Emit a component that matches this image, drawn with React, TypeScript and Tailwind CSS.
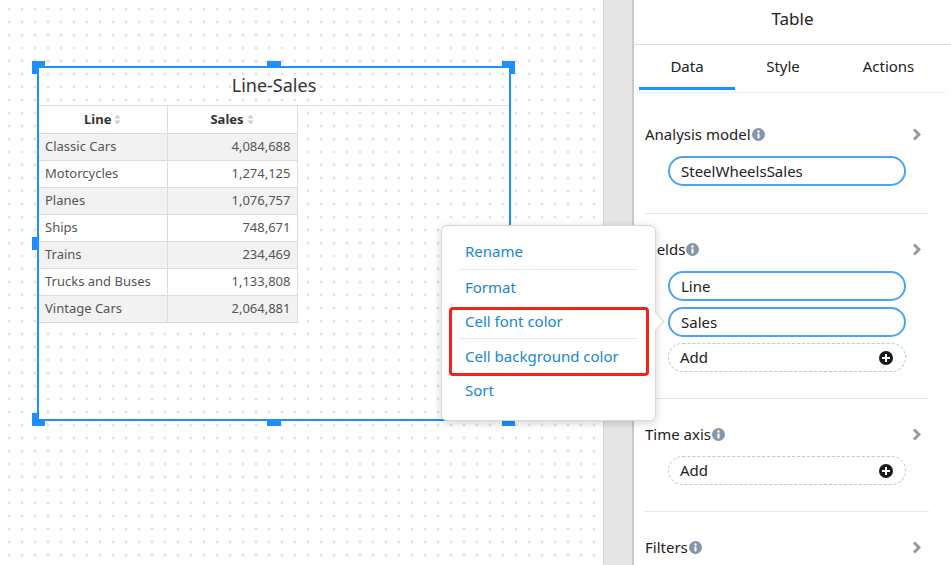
import React from "react";

const rows = [
  { line: "Classic Cars", sales: "4,084,688" },
  { line: "Motorcycles", sales: "1,274,125" },
  { line: "Planes", sales: "1,076,757" },
  { line: "Ships", sales: "748,671" },
  { line: "Trains", sales: "234,469" },
  { line: "Trucks and Buses", sales: "1,133,808" },
  { line: "Vintage Cars", sales: "2,064,881" },
];

const dots =
  "bg-fixed bg-[radial-gradient(circle,#dcdcdc_1px,transparent_1.5px)] bg-[length:13px_13px] bg-[position:2.5px_2.5px]";

const SortIcon = () => (
  <svg width="7" height="11" viewBox="0 0 7 11" className="ml-[3px]">
    <path d="M3.5 0.5 L6.5 4.5 H0.5 Z" fill="#cccccc" />
    <path d="M3.5 10.5 L6.5 6.5 H0.5 Z" fill="#cccccc" />
  </svg>
);

const InfoIcon = () => (
  <svg width="13" height="13" viewBox="0 0 14 14" className="ml-[1px]">
    <circle cx="7" cy="7" r="7" fill="#8795a8" />
    <circle cx="7" cy="3.8" r="1.3" fill="#fff" />
    <rect x="5.9" y="5.8" width="2.2" height="5.4" rx="0.6" fill="#fff" />
  </svg>
);

const Chevron = () => (
  <svg width="9" height="13" viewBox="0 0 9 13">
    <path d="M2 1.5 L7 6.5 L2 11.5" fill="none" stroke="#9a9a9a" strokeWidth="3" />
  </svg>
);

const PlusCircle = () => (
  <svg width="14" height="14" viewBox="0 0 14 14">
    <circle cx="7" cy="7" r="7" fill="#1a1a1a" />
    <rect x="6" y="3" width="2" height="8" fill="#fff" />
    <rect x="3" y="6" width="8" height="2" fill="#fff" />
  </svg>
);

const Pill = ({ label }: { label: string }) => (
  <div className="ml-[23px] flex h-[30px] w-[238px] items-center rounded-full border-2 border-[#4ba3f1] px-[11px] text-[15px] text-[#222]">
    {label}
  </div>
);

const AddPill = () => (
  <div className="ml-[23px] flex h-[29px] w-[238px] items-center justify-between rounded-full border border-dashed border-[#c6c6c6] pl-[11px] pr-[12px] text-[15px] text-[#222]">
    <span>Add</span>
    <PlusCircle />
  </div>
);

const Section = ({
  title,
  children,
  first,
}: {
  title: string;
  children?: React.ReactNode;
  first?: boolean;
}) => (
  <div
    className={
      first
        ? "mr-[22px] pt-[31px] pb-[27px]"
        : "mr-[22px] border-t border-[#e6e6e6] pt-[25px] pb-[26px]"
    }
  >
    <div className="flex h-[20px] items-center justify-between pr-[8px] text-[15px] text-[#222]">
      <div className="flex items-center">
        {title}
        <InfoIcon />
      </div>
      <Chevron />
    </div>
    {children && <div className="mt-[12px] flex flex-col gap-[6px]">{children}</div>}
  </div>
);

const Handle = ({ className }: { className: string }) => (
  <div className={"absolute z-0 bg-[#1e8fff] " + className} />
);

export default function App() {
  return (
    <div className="relative flex h-[565px] w-[951px] overflow-hidden bg-white font-['Noto_Sans',sans-serif]">
      {/* canvas */}
      <div className={"relative h-full w-[603px] bg-white " + dots}>
        <Handle className="left-[32px] top-[61px] h-[13px] w-[13px]" />
        <Handle className="left-[502px] top-[61px] h-[13px] w-[13px]" />
        <Handle className="left-[32px] top-[413px] h-[13px] w-[13px]" />
        <Handle className="left-[502px] top-[413px] h-[13px] w-[13px]" />
        <Handle className="left-[267px] top-[61px] h-[13px] w-[14px]" />
        <Handle className="left-[267px] top-[413px] h-[13px] w-[14px]" />
        <Handle className="left-[32px] top-[237px] h-[13px] w-[13px]" />
        <Handle className="left-[502px] top-[237px] h-[13px] w-[13px]" />

        <div
          className={
            "absolute left-[37px] top-[66px] z-10 h-[355px] w-[474px] border-2 border-[#1e8fff] bg-white " +
            dots
          }
        >
          <div className="flex h-[37px] items-center justify-center pb-[2px] text-[18px] text-[#333]">
            Line-Sales
          </div>
          <div className="border-t border-[#dcdcdc]">
            <table className="border-collapse text-[13px] text-[#555]">
              <thead>
                <tr className="h-[27px] bg-white">
                  <th className="w-[128px] border-r border-b border-[#dcdcdc] p-0 font-bold text-[#333]">
                    <div className="flex items-center justify-center">
                      Line
                      <SortIcon />
                    </div>
                  </th>
                  <th className="w-[130px] border-r border-b border-[#dcdcdc] p-0 font-bold text-[#333]">
                    <div className="flex items-center justify-center">
                      Sales
                      <SortIcon />
                    </div>
                  </th>
                </tr>
              </thead>
              <tbody>
                {rows.map((r, i) => (
                  <tr
                    key={r.line}
                    className={i % 2 === 0 ? "h-[27px] bg-[#f2f2f2]" : "h-[27px] bg-white"}
                  >
                    <td className="border-r border-b border-[#dcdcdc] px-[6px] py-0">{r.line}</td>
                    <td className="border-r border-b border-[#dcdcdc] px-[6px] py-0 text-right">
                      {r.sales}
                    </td>
                  </tr>
                ))}
              </tbody>
            </table>
          </div>
        </div>
      </div>

      {/* splitter */}
      <div className="h-full w-[31px] border-l border-[#d6d6d6] border-r-2 border-r-[#c9c9c9] bg-[#e6e6e6]" />

      {/* property panel */}
      <div className="flex h-full flex-1 flex-col bg-white text-[#222]">
        <div className="flex h-[45px] shrink-0 items-center justify-center border-b border-[#dedede] pb-[6px] text-[17px]">
          Table
        </div>
        <div className="mx-[5px] flex h-[48px] shrink-0 border-b border-[#ececec] text-[15px]">
          <div className="flex w-[96px] flex-col">
            <div className="flex flex-1 items-center justify-center pt-[1px]">Data</div>
            <div className="mb-[2px] h-[3px] bg-[#1e8fff]" />
          </div>
          <div className="flex w-[96px] items-center justify-center pb-[4px]">Style</div>
          <div className="flex flex-1 items-center justify-center pb-[4px]">Actions</div>
        </div>
        <div className="pl-[11px]">
          <Section title="Analysis model" first>
            <Pill label="SteelWheelsSales" />
          </Section>
          <Section title="Fields">
            <Pill label="Line" />
            <Pill label="Sales" />
            <AddPill />
          </Section>
          <Section title="Time axis">
            <AddPill />
          </Section>
          <Section title="Filters" />
        </div>
      </div>

      {/* context menu */}
      <div className="absolute left-[441px] top-[225px] z-20 h-[196px] w-[215px] rounded-[6px] border border-[#d9d9d9] bg-white pt-[8px] shadow-[0_2px_8px_rgba(0,0,0,0.18)]">
        <div className="absolute right-[-7px] top-[89px] h-[13px] w-[13px] rotate-45 border-t border-r border-[#d9d9d9] bg-white" />
        <div className="absolute left-[7px] top-[81px] h-[69px] w-[200px] rounded-[4px] border-[3px] border-[#f5221a]" />
        <div className="relative text-[15px] text-[#1787cf]">
          <div className="mx-[17px] flex h-[36px] items-center border-b border-[#e8e8e8] pl-[6px]">Rename</div>
          <div className="flex h-[34px] items-center pl-[23px]">Format</div>
          <div className="mx-[17px] flex h-[35px] items-center border-b border-[#e8e8e8] pl-[6px]">
            Cell font color
          </div>
          <div className="flex h-[34px] items-center pl-[23px]">Cell background color</div>
          <div className="flex h-[35px] items-center pl-[23px]">Sort</div>
        </div>
      </div>
    </div>
  );
}
